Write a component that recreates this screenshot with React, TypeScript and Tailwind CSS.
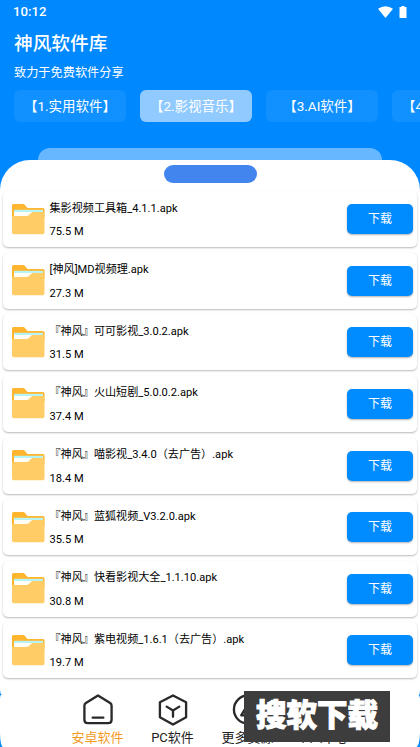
import React from "react";

const files = [
  { name: "集影视频工具箱_4.1.1.apk", size: "75.5 M" },
  { name: "[神风]MD视频理.apk", size: "27.3 M" },
  { name: "『神风』可可影视_3.0.2.apk", size: "31.5 M" },
  { name: "『神风』火山短剧_5.0.0.2.apk", size: "37.4 M" },
  { name: "『神风』喵影视_3.4.0（去广告）.apk", size: "18.4 M" },
  { name: "『神风』蓝狐视频_V3.2.0.apk", size: "35.5 M" },
  { name: "『神风』快看影视大全_1.1.10.apk", size: "30.8 M" },
  { name: "『神风』紫电视频_1.6.1（去广告）.apk", size: "19.7 M" },
];

const tabs = ["【1.实用软件】", "【2.影视音乐】", "【3.AI软件】", "【4.系统软件】"];

function Folder() {
  return (
    <svg width="33" height="31" viewBox="0 0 33 31" className="shrink-0">
      <path d="M1.500 0H12l3.500 4H31a1.500 1.500 0 0 1 1.500 1.500V14H0V1.500A1.500 1.500 0 0 1 1.500 0Z" fill="#ffb52e" />
      <path d="M2 5.800H31V8.500H2Z" fill="#b5f3f4" />
      <path d="M2 8H31V14H2Z" fill="#fffdf5" />
      <path d="M0 12h14.500q1.500 0 2.500-1l2-2q1-1 2.500-1H32.500V28.500a1.800 1.800 0 0 1-1.800 1.800H1.800A1.800 1.800 0 0 1 0 28.500Z" fill="#ffcc66" />
    </svg>
  );
}

function FileRow({ name, size }: { name: string; size: string }) {
  return (
    <li className="flex h-14 items-center rounded-[5px] bg-white pl-[9px] pr-[4px] shadow-[0_1px_2px_rgba(0,0,0,0.28)]">
      <Folder />
      <div className="ml-[4.500px] flex h-full flex-1 flex-col pt-[9.500px] text-[11.100px] leading-[16px] text-black">
        <span className="whitespace-nowrap">{name}</span>
        <span className="mt-[7.500px]">{size}</span>
      </div>
      <button className="h-[30px] w-[66px] rounded-[5px] bg-[#008cff] pt-px text-[12px] leading-[29px] text-white shadow-[0_1px_2px_rgba(0,0,0,0.3)]">
        下载
      </button>
    </li>
  );
}

function NavItem({ label, active, children }: { label: string; active?: boolean; children: React.ReactNode }) {
  return (
    <div className={"flex w-[75px] flex-col items-center " + (active ? "text-[#f39a1d]" : "text-[#222222]")}>
      <svg width="34" height="34" viewBox="0 0 34 34" fill="none" stroke="#292929" strokeWidth="2.400" strokeLinejoin="round" strokeLinecap="round" className="-mt-px">
        {children}
      </svg>
      <span className="mt-[2px] whitespace-nowrap text-[13px] leading-[18px]">{label}</span>
    </div>
  );
}

export default function App() {
  return (
    <div className="relative flex h-[747px] w-[420px] flex-col overflow-hidden bg-[#0088ff] font-['Roboto','Noto_Sans_CJK_SC',sans-serif]">
      <header className="flex h-[148px] shrink-0 flex-col pl-[14px] text-white">
        <div className="flex h-[24px] items-center justify-between pr-[13px]">
          <span className="-ml-px text-[13.200px] font-medium leading-[24px]">10:12</span>
          <div className="flex items-center gap-[6px]">
            <svg width="15" height="12" viewBox="0 0 15 12" fill="white">
              <path d="M0 2.800Q7.500-2.200 15 2.800L7.500 12Z" />
            </svg>
            <svg width="8" height="12" viewBox="0 0 8 12" fill="white">
              <path d="M2.500 0h3v1H7.500v11H.5V1h2Z" />
            </svg>
          </div>
        </div>
        <h1 className="mt-[6px] text-[18.700px] font-medium leading-[28px]">神风软件库</h1>
        <p className="mt-[6px] text-[12.200px] leading-[18px]">致力于免费软件分享</p>
        <nav className="mt-[8px] flex h-[32px] gap-[14px]">
          {tabs.map((tab, i) => (
            <button
              key={tab}
              className={"w-[112px] shrink-0 whitespace-nowrap rounded-[6px] text-[13.500px] leading-[32px] " + (i === 1 ? "bg-[#91caff]" : "bg-[#1190ff]")}
            >
              {tab}
            </button>
          ))}
        </nav>
      </header>

      <div className="mx-auto h-[12px] w-[344px] shrink-0 rounded-t-[14px] bg-[#66b7ff]" />

      <main className="flex h-[535px] shrink-0 flex-col rounded-[30px_30px_1px_2px/30px_30px_6px_6px] bg-white">
        <div className="mx-auto mt-[5px] h-[18px] w-[93px] shrink-0 rounded-full bg-[#4285ef]" />
        <ul className="ml-[3px] mr-[3px] mt-[8px] flex flex-col gap-[5.650px]">
          {files.map((f) => (
            <FileRow key={f.name} name={f.name} size={f.size} />
          ))}
        </ul>
      </main>

      <footer className="flex h-[52px] shrink-0 rounded-[1px_2px_4px_3px/5px_5px_14px_14px] bg-white pl-[60px]">
        <NavItem label="安卓软件" active>
          <path d="M17 1.500 29.500 9.300Q31 10.300 31 12V26.500Q31 30 27.500 30H6.500Q3 30 3 26.500V12Q3 10.300 4.500 9.300ZM11.500 24.300H22.500" />
        </NavItem>
        <NavItem label="PC软件">
          <path d="M17 1.500 30.500 8.500V24L17 31.500 3.500 24V8.500ZM17 23.500V17L10.500 13M17 17l6.500-4" />
        </NavItem>
        <NavItem label="更多资源">
          <circle cx="17" cy="16" r="14.500" />
          <path d="m10 22 8-13 6 13Z" />
        </NavItem>
        <NavItem label="个人中心">
          <circle cx="17" cy="10" r="6" />
          <path d="M5 29c0-15 24-15 24 0Z" />
        </NavItem>
      </footer>

      <div className="absolute left-[244px] top-[691px] flex h-[51px] w-[146px] items-center justify-center bg-[#3d3d3d] font-['Noto_Sans_CJK_SC',sans-serif] text-[30.500px] font-black text-white">
        <span className="-mt-[7px] whitespace-nowrap leading-[51px] [-webkit-text-stroke:1px_white]">搜软下载</span>
      </div>
    </div>
  );
}
